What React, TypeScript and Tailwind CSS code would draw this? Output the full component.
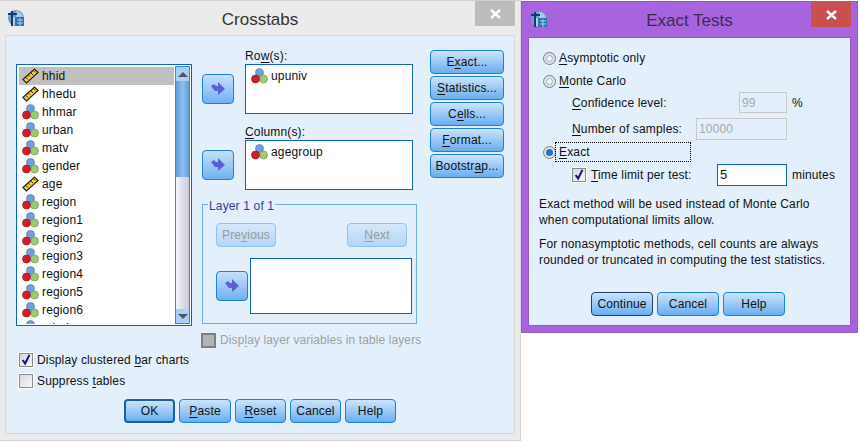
import type { ReactNode } from 'react';

const BUTTON =
  'flex h-6 items-center justify-center rounded-[4px] border bg-gradient-to-b from-[#cbe4fc] to-[#69adef] text-[12px] text-[#111]';
const BLUE_BUTTON = BUTTON + ' border-[#1b82d8]';
const OFF_BUTTON =
  'flex h-6 w-[60px] items-center justify-center rounded-[4px] border border-[#8cc2f0] bg-gradient-to-b from-[#d6e8fa] to-[#b4d6f6] text-[12px] text-[#999]';

function AppIcon() {
  return (
    <svg width="16" height="16" viewBox="0 0 16 16" className="shrink-0">
      <circle cx="8" cy="8" r="8" fill="#6f9ec4" />
      <path d="M8 1a7 7 0 0 1 7 7H8z" fill="#a9cbe2" />
      <rect x="7" y="7" width="9" height="9" fill="#2f72b4" />
      <path d="M9 10h6M9 13h6M12 8v8" stroke="#a8cdea" strokeWidth="1" />
      <path d="M4 1v15M0 4h9" stroke="#123a78" strokeWidth="2" />
      <path d="M6 7v8" stroke="#fff" strokeWidth="1" />
    </svg>
  );
}

function CloseIcon() {
  return (
    <svg width="11" height="10" viewBox="0 0 11 10">
      <path d="M1 1l9 8M10 1l-9 8" stroke="#fff" strokeWidth="2.4" />
    </svg>
  );
}

function NominalIcon() {
  return (
    <svg width="17" height="16" viewBox="0 0 17 16" className="shrink-0">
      <circle cx="8.5" cy="4.5" r="4" fill="#6f9fdc" stroke="#4f7fb8" strokeWidth="0.7" />
      <circle cx="12.5" cy="11" r="4" fill="#9fcb70" stroke="#6f9a50" strokeWidth="0.7" />
      <circle cx="4.5" cy="11" r="4" fill="#d01f2c" stroke="#8f1820" strokeWidth="0.7" />
    </svg>
  );
}

function RulerIcon() {
  return (
    <svg width="17" height="16" viewBox="0 0 17 16" className="shrink-0">
      <path d="M1 11.5 12.5 1 16 4.5 4.5 15z" fill="#f8cf30" stroke="#222" strokeWidth="1.2" />
      <path d="M4 9.5l2 2M6.5 7.2l1.5 1.5M9 5l2 2M11.5 2.8l1.5 1.5" stroke="#222" strokeWidth="1" />
    </svg>
  );
}

function ArrowButton() {
  return (
    <div className="flex h-[30px] w-[32px] shrink-0 items-center justify-center rounded-[4px] border border-[#1b82d8] bg-gradient-to-b from-[#c5e0fb] to-[#6fb1f0]">
      <svg width="14" height="14" viewBox="0 0 14 14">
        <path d="M0 4 3 2 5 4H7V0L14 7 7 13V9H4Z" fill="#5a5fd2" />
      </svg>
    </div>
  );
}

function CheckBox({ checked, disabled }: { checked?: boolean; disabled?: boolean }) {
  return (
    <span
      className={
        disabled
          ? 'flex h-[15px] w-[15px] shrink-0 border-2 border-[#7f7f7f] bg-[#b4b4b4]'
          : 'flex h-[14px] w-[14px] shrink-0 items-center justify-center border border-[#8c8c8c] bg-gradient-to-br from-[#d8d8d8] to-[#f8f8f8] outline outline-1 outline-white'
      }
    >
      {checked && (
        <svg width="14" height="14" viewBox="0 0 14 14">
          <path d="M3 7l3 4 5-10" fill="none" stroke="#14148c" strokeWidth="2.4" />
        </svg>
      )}
    </span>
  );
}

function Radio({ selected }: { selected?: boolean }) {
  return (
    <span className="flex h-[13px] w-[13px] shrink-0 items-center justify-center rounded-full border border-[#7c7c7c] bg-[#dfe3e6]">
      <span
        className={
          selected
            ? 'h-[7px] w-[7px] rounded-full bg-[#1f78d0]'
            : 'h-[7px] w-[7px] rounded-full border border-[#9fb4c6] bg-[#f2f6fa]'
        }
      />
    </span>
  );
}

function Variable({ name, ruler, selected }: { name: string; ruler?: boolean; selected?: boolean }) {
  return (
    <div className={selected ? 'flex h-[18px] items-center gap-[3px] bg-[#c0c0c0] pl-[3px]' : 'flex h-[18px] items-center gap-[3px] pl-[3px]'}>
      {ruler ? <RulerIcon /> : <NominalIcon />}
      <span>{name}</span>
    </div>
  );
}

const VARIABLES = [
  { name: 'hhid', ruler: true, selected: true },
  { name: 'hhedu', ruler: true },
  { name: 'hhmar' },
  { name: 'urban' },
  { name: 'matv' },
  { name: 'gender' },
  { name: 'age', ruler: true },
  { name: 'region' },
  { name: 'region1' },
  { name: 'region2' },
  { name: 'region3' },
  { name: 'region4' },
  { name: 'region5' },
  { name: 'region6' },
  { name: 'ethnic' },
];

function VariableList() {
  return (
    <div className="flex h-[262px] w-[176px] shrink-0 border border-[#0a64c0] bg-white p-[1px] text-[12px] text-[#111]">
      <div className="h-full w-[156px] overflow-hidden pl-[1px] pt-[1px]">
        {VARIABLES.map((v) => (
          <Variable key={v.name} {...v} />
        ))}
      </div>
      <div className="ml-[1px] flex w-[15px] flex-col border-x border-x-[#2a8ae8] bg-[#d5d5e4]">
        <div className="flex h-[15px] items-center justify-center border-t border-[#2a8ae8] bg-[#a9d2fa]">
          <div className="h-0 w-0 border-x-[5px] border-b-[5px] border-x-transparent border-b-[#555]" />
        </div>
        <div className="h-[96px] bg-gradient-to-r from-[#5f9ddd] via-[#8fc0f0] to-[#5f9ddd]" />
        <div className="flex-1 bg-gradient-to-r from-[#f4f4f8] to-[#c8c8da]" />
        <div className="flex h-[15px] items-center justify-center border-b border-[#2a8ae8] bg-[#a9d2fa]">
          <div className="h-0 w-0 border-x-[5px] border-t-[5px] border-x-transparent border-t-[#555]" />
        </div>
      </div>
    </div>
  );
}

function SlotRow({ label, variable }: { label: ReactNode; variable: string }) {
  return (
    <div className="flex items-end gap-[11px]">
      <div className="mb-[10px]">
        <ArrowButton />
      </div>
      <div>
        <div className="h-[15px] text-[12px] leading-[15px] text-[#111]">{label}</div>
        <div className="h-[50px] w-[168px] border border-[#0a64c0] bg-white pl-[5px] pt-[2px] text-[12px] text-[#111]">
          <div className="flex items-center gap-[3px]">
            <NominalIcon />
            <span>{variable}</span>
          </div>
        </div>
      </div>
    </div>
  );
}

function CrosstabsWindow() {
  return (
    <div className="flex h-[441px] w-[521px] shrink-0 flex-col border-y border-r border-y-[#d0d0d0] border-r-[#d8d8d8] bg-[#ebebeb] pb-[6px] pl-[5px] pr-[5px]">
      <div className="relative flex h-[34px] shrink-0 items-center justify-center pt-[3px]">
        <div className="absolute left-[3px] top-[9px]">
          <AppIcon />
        </div>
        <span className="text-[17px] tracking-normal text-[#333]">Crosstabs</span>
        <div className="absolute right-0 top-0 flex h-[25px] w-[40px] items-center justify-center bg-[#bcbcbc]">
          <CloseIcon />
        </div>
      </div>
      <div className="flex flex-1 flex-col border border-[#d8d8d8] bg-[#e3effb] pl-[10px] pt-[28px]">
        <div className="flex">
          <VariableList />
          <div className="-mt-[15px] ml-[10px] w-[215px] shrink-0">
            <div className="flex flex-col gap-[11px]">
              <SlotRow label={<>Ro<u>w</u>(s):</>} variable="upuniv" />
              <SlotRow label={<><u>C</u>olumn(s):</>} variable="agegroup" />
            </div>
            <div className="relative mt-[14px] h-[120px] border border-[#70aee0] pl-[13px] pr-[9px] pt-[18px]">
              <span className="absolute left-[5px] top-[-6px] bg-[#e3effb] px-[1px] text-[12px] leading-[14px] text-[#3a3a9c]">Layer 1 of 1</span>
              <div className="flex justify-between">
                <div className={OFF_BUTTON}>Pre<u>v</u>ious</div>
                <div className={OFF_BUTTON}><u>N</u>ext</div>
              </div>
              <div className="mt-[11px] flex items-center gap-[2px]">
                <ArrowButton />
                <div className="h-[56px] w-[162px] shrink-0 border border-[#0a64c0] bg-white" />
              </div>
            </div>
            <div className="-ml-[1px] mt-[7px] flex items-center gap-[4px] whitespace-nowrap text-[12px] tracking-[0.1px] text-[#a0a0a0]">
              <CheckBox disabled />
              <span>Disp<u>l</u>ay layer variables in table layers</span>
            </div>
          </div>
          <div className="-mt-[14px] ml-[13px] flex w-[74px] shrink-0 flex-col gap-[2px]">
            <div className={BLUE_BUTTON}>E<u>x</u>act...</div>
            <div className={BLUE_BUTTON}><u>S</u>tatistics...</div>
            <div className={BLUE_BUTTON}>C<u>e</u>lls...</div>
            <div className={BLUE_BUTTON}><u>F</u>ormat...</div>
            <div className={BLUE_BUTTON}>Bootstr<u>a</u>p...</div>
          </div>
        </div>
        <div className="ml-[3px] mt-[2px] flex flex-col gap-[3px] text-[12px] text-[#111]">
          <div className="flex items-center gap-[4px]">
            <CheckBox checked />
            <span>Display clustered <u>b</u>ar charts</span>
          </div>
          <div className="flex items-center gap-[4px]">
            <CheckBox />
            <span>Suppress <u>t</u>ables</span>
          </div>
        </div>
        <div className="ml-[108px] mt-[9px] flex gap-[4px]">
          <div className={BUTTON + ' w-[51px] border-2 border-[#1a5fa8]'}>OK</div>
          <div className={BLUE_BUTTON + ' w-[52px]'}><u>P</u>aste</div>
          <div className={BLUE_BUTTON + ' w-[51px]'}><u>R</u>eset</div>
          <div className={BLUE_BUTTON + ' w-[51px]'}>Cancel</div>
          <div className={BLUE_BUTTON + ' w-[51px]'}>Help</div>
        </div>
      </div>
    </div>
  );
}

function ExactWindow() {
  return (
    <div className="mt-[1px] flex h-[332px] w-[337px] shrink-0 flex-col border border-[#8f5cbc] bg-[#a864de] px-[6px] pb-[6px] text-[12px] text-[#111]">
      <div className="relative flex h-[35px] shrink-0 items-center justify-center pt-[2px]">
        <div className="absolute left-[3px] top-[9px]">
          <AppIcon />
        </div>
        <span className="text-[17px] tracking-normal text-[#3d2a50]">Exact Tests</span>
        <div className="absolute right-0 top-0 flex h-[25px] w-[40px] items-center justify-center bg-[#c75050]">
          <CloseIcon />
        </div>
      </div>
      <div className="flex flex-1 flex-col border border-[#8f5cbc] bg-[#e3effb] pl-[10px] pt-[9px]">
        <div className="ml-[4px] flex h-[22px] items-center gap-[3px]">
          <Radio />
          <span><u>A</u>symptotic only</span>
        </div>
        <div className="ml-[4px] mt-[1px] flex h-[22px] items-center gap-[3px]">
          <Radio />
          <span><u>M</u>onte Carlo</span>
        </div>
        <div className="ml-[33px] flex h-[21px] w-[232px] items-center">
          <span className="flex-1"><u>C</u>onfidence level:</span>
          <div className="flex h-[21px] w-[48px] items-center border border-[#c8c8c8] px-[2px] text-[#a8a8a8]">99</div>
          <span className="ml-[5px] w-[12px]">%</span>
        </div>
        <div className="ml-[33px] mt-[5px] flex h-[22px] w-[215px] items-center">
          <span className="flex-1"><u>N</u>umber of samples:</span>
          <div className="flex h-[22px] w-[91px] items-center border border-[#c8c8c8] px-[2px] text-[#a8a8a8]">10000</div>
        </div>
        <div className="ml-[4px] mt-[2px] flex h-[20px] items-center">
          <Radio selected />
          <span className="-ml-[1px] flex h-[20px] w-[136px] items-center border border-dotted border-black pl-[3px]"><u>E</u>xact</span>
        </div>
        <div className="ml-[33px] mt-[2px] flex h-[22px] items-center gap-[5px]">
          <CheckBox checked />
          <span className="w-[121px]"><u>T</u>ime limit per test:</span>
          <div className="flex h-[22px] w-[70px] items-center border border-[#0a64c0] bg-white px-[2px] text-[13px]">5</div>
          <span>minutes</span>
        </div>
        <div className="mt-[10px] leading-[16px]">
          <p>Exact method will be used instead of Monte Carlo<br />when computational limits allow.</p>
          <p className="mt-[8px]">For nonasymptotic methods, cell counts are always<br />rounded or truncated in computing the test statistics.</p>
        </div>
        <div className="ml-[52px] mt-[24px] flex gap-[4px]">
          <div className={BUTTON + ' w-[62px] border-[#24405e]'}>Continue</div>
          <div className={BLUE_BUTTON + ' w-[62px]'}>Cancel</div>
          <div className={BLUE_BUTTON + ' w-[62px]'}>Help</div>
        </div>
      </div>
    </div>
  );
}

export default function App() {
  return (
    <div className="flex h-[441px] w-[860px] items-start bg-white font-['Liberation_Sans',Arial,sans-serif] tracking-[0.15px] [&_u]:underline-offset-2">
      <CrosstabsWindow />
      <ExactWindow />
    </div>
  );
}
